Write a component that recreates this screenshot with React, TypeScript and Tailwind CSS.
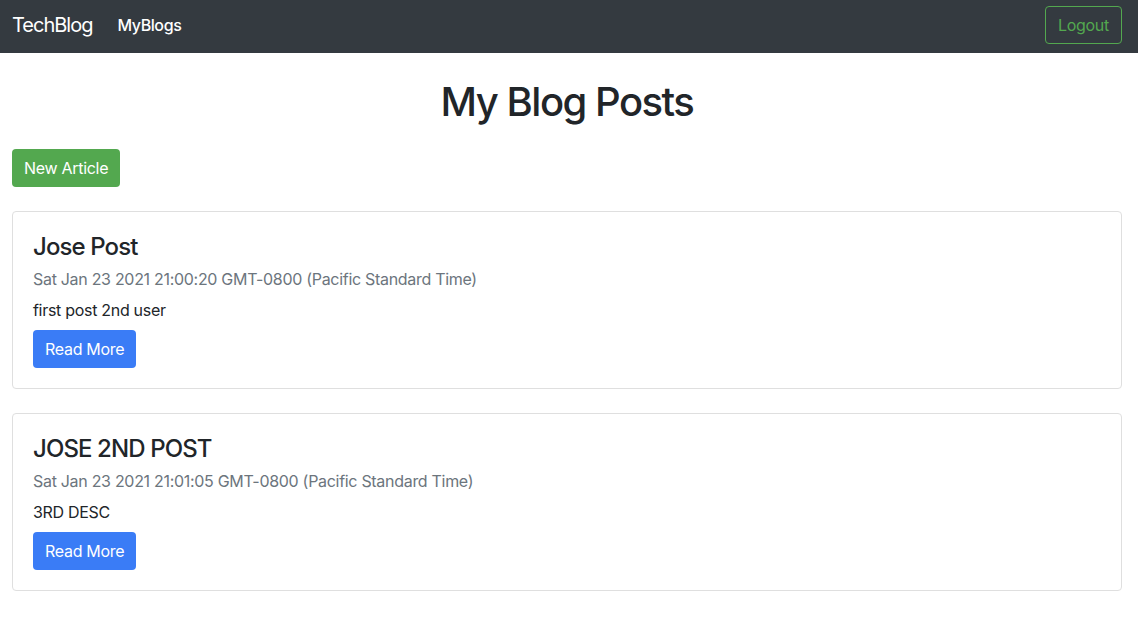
import React from 'react'

const posts = [
    {
        title: 'Jose Post',
        date: 'Sat Jan 23 2021 21:00:20 GMT-0800 (Pacific Standard Time)',
        desc: 'first post 2nd user',
    },
    {
        title: 'JOSE 2ND POST',
        date: 'Sat Jan 23 2021 21:01:05 GMT-0800 (Pacific Standard Time)',
        desc: '3RD DESC',
    },
]

export default function App() {
    return (
        <div className="min-h-screen bg-white text-[#212529] font-['Inter','Liberation_Sans',sans-serif]">
            {/* Navbar */}
            <nav className="bg-[#343a40] h-[53px] pl-3 pr-4 pb-1 flex items-center justify-between">
                <div className="flex items-center">
                    <a href="#" className="text-white text-[20px] tracking-[-1px] mr-[25px]">
                        TechBlog
                    </a>
                    <a href="#" className="text-white text-[16px] font-medium tracking-[-0.4px]">
                        MyBlogs
                    </a>
                </div>
                <button className="h-[38px] w-[77px] border border-[#53a84f] text-[#53a84f] rounded text-[16px] tracking-[-0.3px]">
                    Logout
                </button>
            </nav>

            <div className="pl-3 pr-4">
                <h1 className="text-[40px] leading-[48px] font-medium text-center mt-[25px] mb-2 tracking-[-1.5px]">
                    My Blog Posts
                </h1>

                <button className="h-[38px] px-3 mt-[15px] bg-[#53a84f] text-white rounded text-[16px] tracking-[-0.3px]">
                    New Article
                </button>

                {posts.map((p) => (
                    <div key={p.title} className="mt-6 border border-[#dfdfdf] rounded p-5">
                        <h4 className="text-[24px] leading-[29px] font-medium mb-[6px] tracking-[-0.9px]">{p.title}</h4>
                        <div className="text-[16px] leading-6 text-[#6c757d] mb-[7px] tracking-[-0.3px]">{p.date}</div>
                        <p className="text-[16px] leading-6 mb-2 tracking-[-0.3px]">{p.desc}</p>
                        <button className="h-[38px] px-3 bg-[#3a7cf6] text-white rounded text-[16px] tracking-[-0.3px]">
                            Read More
                        </button>
                    </div>
                ))}
            </div>
        </div>
    )
}
